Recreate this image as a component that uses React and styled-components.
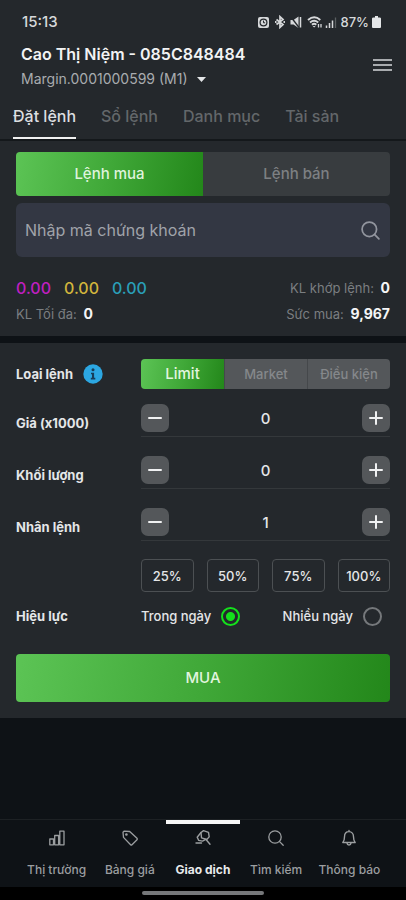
import { useState } from 'react';
import styled, { createGlobalStyle } from 'styled-components';

const GlobalStyle = createGlobalStyle`
  * {
    box-sizing: border-box;
  }

  body {
    margin: 0;
    background: #0e1216;
    color: #e4e6e8;
    font-family: Inter, 'Noto Sans', sans-serif;
    font-size: 13px;
    line-height: 20px;
  }

  button,
  input {
    font: inherit;
    color: inherit;
    margin: 0;
    padding: 0;
    border: 0;
    background: none;
  }

  a {
    color: inherit;
    text-decoration: none;
  }
`;

const green = 'linear-gradient(100deg, #5cc455 0%, #40a838 50%, #23871a 100%)';

const Page = styled.div`
  min-height: 100vh;
  display: flex;
  flex-direction: column;
`;

const Panel = styled.section`
  background: #24282c;
  padding: ${(props) => props.$padding};
`;

/* Status bar */
const StatusBar = styled.div`
  display: flex;
  justify-content: space-between;
  align-items: center;
  height: 44px;
  padding: 0 25px 0 22px;
  background: #24282c;
  font-size: 15px;
  font-weight: 500;
  color: #d6d8da;
`;

const StatusIcons = styled.div`
  display: flex;
  align-items: center;
  gap: 3px;
  font-size: 13px;

  svg {
    display: block;
  }
`;

/* Header */
const Header = styled.header`
  display: flex;
  justify-content: space-between;
  align-items: center;
  padding: 0 14px 0 21px;
  background: #24282c;
`;

const AccountName = styled.h1`
  margin: 0 0 5px;
  font-size: 16px;
  line-height: 20px;
  font-weight: 600;
  color: #f2f3f4;
`;

const AccountButton = styled.button`
  display: flex;
  align-items: center;
  gap: 9px;
  font-size: 14px;
  color: #a9acaf;

  svg {
    display: block;
  }
`;

const MenuButton = styled.button`
  display: flex;
  flex-direction: column;
  gap: 3px;
  width: 19px;
  margin-bottom: 4px;

  span {
    height: 2px;
    background: #a9acaf;
  }
`;

const Tabs = styled.nav`
  display: flex;
  gap: 25px;
  padding: 17px 13px 0;
  background: #24282c;
  border-bottom: 2px solid #14181b;
`;

const Tab = styled.a`
  padding-bottom: 11px;
  border-bottom: 2px solid ${(props) => (props.$active ? '#f0f0f0' : 'transparent')};
  font-size: 16px;
  font-weight: 500;
  color: ${(props) => (props.$active ? '#dcdee0' : '#63676a')};
`;

/* Buy / sell switch */
const SideSwitch = styled.div`
  display: grid;
  grid-template-columns: 1fr 1fr;
  height: 44px;
  margin-bottom: 7px;
  border-radius: 4px;
  overflow: hidden;
`;

const SideButton = styled.button`
  background: ${(props) => (props.$active ? green : '#383c3f')};
  color: ${(props) => (props.$active ? '#dff3dc' : '#7d8083')};
  font-size: 15px;
  font-weight: 500;
`;

const SearchBox = styled.label`
  display: flex;
  align-items: center;
  height: 54px;
  margin-bottom: 20px;
  padding: 0 9px;
  border-radius: 6px;
  background: #333743;
  color: #92959e;

  input {
    flex: 1;
    min-width: 0;
    font-size: 16px;
    outline: none;
  }

  input::placeholder {
    color: #a0a3aa;
    opacity: 1;
  }
`;

const Summary = styled.div`
  display: flex;
  justify-content: space-between;
  align-items: center;
  height: 22px;
  margin-bottom: ${(props) => props.$gap || '0'};
  color: #7b7e81;

  strong {
    margin-left: 3px;
    font-size: 14px;
    font-weight: 700;
    color: #f4f5f6;
  }
`;

const Prices = styled.div`
  display: flex;
  gap: 13px;
  font-size: 16px;
  font-weight: 500;
`;

const Price = styled.span`
  color: ${(props) => props.$color};
`;

/* Order form */
const Form = styled.form`
  display: flex;
  flex-direction: column;
  margin-top: 7px;
  padding: 16px;
  background: #24282c;
`;

const Row = styled.div`
  display: grid;
  grid-template-columns: 125px minmax(0, 1fr);
  align-items: ${(props) => props.$align || 'center'};
  margin-bottom: ${(props) => props.$gap};
`;

const RowLabel = styled.label`
  display: flex;
  align-items: center;
  gap: 10px;
  line-height: 28px;
  font-weight: 700;
  color: #e4e6e8;
`;

const TypeSwitch = styled.div`
  display: grid;
  grid-template-columns: repeat(3, 1fr);
  height: 30px;
  border-radius: 4px;
  overflow: hidden;
`;

const TypeButton = styled.button`
  background: ${(props) => (props.$active ? green : '#54575a')};
  color: ${(props) => (props.$active ? '#e2f5df' : '#85888b')};
  font-size: ${(props) => (props.$active ? '15px' : '13px')};
  font-weight: 500;

  & + & {
    border-left: 1px solid #45484b;
  }
`;

const Stepper = styled.div`
  display: flex;
  justify-content: space-between;
  height: 33px;
  border-bottom: 1px solid #34383b;

  input {
    flex: 1;
    min-width: 0;
    height: 28px;
    text-align: center;
    font-size: 15px;
    font-weight: 500;
    outline: none;
  }
`;

const StepButton = styled.button`
  display: flex;
  align-items: center;
  justify-content: center;
  width: 28px;
  height: 28px;
  border-radius: 7px;
  background: #54575a;
  color: #f0f1f2;
`;

const Percents = styled.div`
  display: grid;
  grid-template-columns: repeat(4, 1fr);
  gap: 13px;
  grid-column: 2;
`;

const PercentButton = styled.button`
  height: 33px;
  border: 1px solid #4c5053;
  border-radius: 4px;
  font-weight: 500;
`;

const Terms = styled.div`
  display: flex;
  justify-content: space-between;
  padding-right: 8px;
`;

const Term = styled.label`
  display: flex;
  align-items: center;
  gap: 10px;
  font-weight: 500;
`;

const Radio = styled.input`
  appearance: none;
  width: 19px;
  height: 19px;
  border: 2px solid #75787b;
  border-radius: 50%;

  &:checked {
    border-color: #14e01c;
    background: radial-gradient(circle, #14e01c 4px, transparent 5px);
  }
`;

const SubmitButton = styled.button`
  height: 48px;
  border-radius: 4px;
  background: ${green};
  color: #e2f5df;
  font-size: 15px;
  font-weight: 500;
`;

/* Bottom navigation */
const BottomNav = styled.nav`
  display: grid;
  grid-template-columns: repeat(5, 1fr);
  height: 68px;
  margin-top: auto;
  padding: 0 20px;
  border-top: 1px solid #1d2124;
`;

const NavItem = styled.a`
  display: flex;
  flex-direction: column;
  align-items: center;
  gap: 13px;
  padding-top: 5px;
  border-top: 4px solid ${(props) => (props.$active ? '#f6f6f6' : 'transparent')};
  font-size: 12px;
  font-weight: ${(props) => (props.$active ? 700 : 500)};
  color: ${(props) => (props.$active ? '#e8eaeb' : '#9b9ea0')};
  white-space: nowrap;

  svg {
    display: block;
    color: #9b9ea0;
  }
`;

const GestureBar = styled.div`
  display: flex;
  justify-content: center;
  height: 13px;
  padding-top: 4px;
  background: #000;

  span {
    width: 30%;
    height: 4px;
    border-radius: 2px;
    background: #76787a;
  }
`;

const Line = ({ size = 18, width = 1.5, children }) => (
    <svg width={size} height={size} viewBox="0 0 18 18" fill="none" stroke="currentColor"
        strokeWidth={width} strokeLinecap="round" strokeLinejoin="round" aria-hidden="true">
        {children}
    </svg>
);

const SearchIcon = ({ size, width }) => (
    <Line size={size} width={width}>
        <circle cx="8" cy="8" r="6.2" />
        <path d="M12.6 12.6 16.2 16.2" />
    </Line>
);

const InfoIcon = () => (
    <svg width="20" height="20" viewBox="0 0 20 20" aria-hidden="true">
        <circle cx="10" cy="10" r="9.7" fill="#2ca7e2" />
        <circle cx="10" cy="5.8" r="1.5" fill="#173d58" />
        <path d="M8 8.7h3.1v5.1h1.2v1.6H7.8v-1.6H9v-3.5H8z" fill="#173d58" />
    </svg>
);

const SystemIcons = () => (
    <svg width="80" height="14" viewBox="0 0 80 14" fill="none" stroke="#d6d8da" aria-hidden="true">
        {/* alarm */}
        <rect x="1" y="2" width="11" height="11" rx="2" fill="#d6d8da" stroke="none" />
        <circle cx="6.5" cy="7.5" r="3.4" stroke="#24282c" strokeWidth="1.2" />
        <path d="M6.5 5.6v2.2h1.6" stroke="#24282c" strokeWidth="1" />
        {/* bluetooth */}
        <path d="M19.5 4.5l6.5 5-3 2.8V1.7l3 2.8-6.5 5" strokeWidth="1.7" />
        <path d="M18 7h1.5M26.5 7H28" strokeWidth="1.8" />
        {/* muted speaker */}
        <path d="M33.5 5h3l5-3.500v11.500l-5-3.500h-3z" fill="#d6d8da" stroke="none" />
        <path d="M34 2l8 10.5" stroke="#24282c" strokeWidth="1.3" />
        <path d="M43.5 2v10.5" strokeWidth="1.5" />
        {/* wifi */}
        <path d="M51 5c4-3.4 8.5-3.4 12.3 0M53 7.4c2.6-2.2 5.6-2.2 8.2 0M55 9.7c1.3-1.2 3-1.2 4.3 0" strokeWidth="1.9" />
        <path d="M57.1 12.5l-1.5-1.6h3z" fill="#d6d8da" stroke="none" />
        <path d="M61.5 9v3.5M64 9v3.5" strokeWidth="1.3" />
        {/* signal */}
        <path d="M69.5 10.5v2.5M72.5 8v5M75.5 5.5v7.5" strokeWidth="1.5" />
        <path d="M78.5 2.5v10.5" stroke="#5b5f62" strokeWidth="1.3" />
    </svg>
);

const BatteryIcon = () => (
    <svg width="9" height="12" viewBox="0 0 9 12" aria-hidden="true">
        <path d="M3 0h3v1.5h1.500q1.500 0 1.500 1v8.500q0 1-1 1h-7q-1 0-1-1V2.500q0-1 1.500-1H3z" fill="#e4e6e8" />
    </svg>
);

const navItems = [
    {
        label: 'Thị trường',
        icon: (
            <Line width={1.3}>
                <path d="M1.8 10h3.7v5.8H1.8zM6.7 6.5h3.9v9.3H6.7zM11.8 2.2h4.2v13.6h-4.2z" />
            </Line>
        ),
    },
    {
        label: 'Bảng giá',
        icon: (
            <Line width={1.3}>
                <path d="M2 3.2 3 2.2l5.700.3 7.300 6.800a1 1 0 0 1 0 1.400l-5 5a1 1 0 0 1-1.400 0L2.500 8.400z" />
                <circle cx="5.4" cy="5.5" r=".7" />
            </Line>
        ),
    },
    {
        label: 'Giao dịch',
        active: true,
        icon: (
            <Line width={1.4}>
                <path d="M7 3.5 9.5 1.6l5 1.7.7 4.6-2.4 2.600-5.300-1.700z" />
                <path d="M7 3.5 3.2 8.2l1.5 3.2 3.8.7 3.2-1.7M12 10.5l4 4.8M2 14h5.500" />
            </Line>
        ),
    },
    { label: 'Tìm kiếm', icon: <SearchIcon width={1.3} /> },
    {
        label: 'Thông báo',
        icon: (
            <Line width={1.4}>
                <path d="M2.8 13.5c1.6-1.6 1.7-3.4 1.7-5.7C4.5 4.8 6.2 2.6 9 2.6s4.5 2.2 4.5 5.2c0 2.3.1 4.1 1.7 5.7zM7 14.2c.3 2.4 3.7 2.4 4 0M9 1.4v1" />
            </Line>
        ),
    },
];

const NumberField = ({ id, label, initial, gap }) => {
    const [value, setValue] = useState(initial);

    return (
        <Row $align="end" $gap={gap}>
            <RowLabel htmlFor={id}>{label}</RowLabel>
            <Stepper>
                <StepButton type="button" aria-label="Giảm" onClick={() => setValue(Math.max(0, value - 1))}>
                    <Line width={2}><path d="M3 9h12" /></Line>
                </StepButton>
                <input
                    id={id}
                    inputMode="numeric"
                    value={value}
                    onChange={(e) => setValue(Number(e.target.value) || 0)}
                />
                <StepButton type="button" aria-label="Tăng" onClick={() => setValue(value + 1)}>
                    <Line width={2}><path d="M3 9h12M9 3v12" /></Line>
                </StepButton>
            </Stepper>
        </Row>
    );
};

export default function App() {
    const [side, setSide] = useState('Lệnh mua');
    const [type, setType] = useState('Limit');

    return (
        <Page>
            <GlobalStyle />
            <StatusBar>
                <span>15:13</span>
                <StatusIcons>
                    <SystemIcons />
                    <span>87%</span>
                    <BatteryIcon />
                </StatusIcons>
            </StatusBar>

            <Header>
                <div>
                    <AccountName>Cao Thị Niệm - 085C848484</AccountName>
                    <AccountButton type="button">
                        Margin.0001000599 (M1)
                        <svg width="9" height="5" viewBox="0 0 9 5" aria-hidden="true">
                            <path d="M0 0h9L4.500 5z" fill="#e4e6e8" />
                        </svg>
                    </AccountButton>
                </div>
                <MenuButton type="button" aria-label="Menu">
                    <span />
                    <span />
                    <span />
                </MenuButton>
            </Header>

            <Tabs>
                <Tab href="#order" $active>Đặt lệnh</Tab>
                <Tab href="#book">Sổ lệnh</Tab>
                <Tab href="#portfolio">Danh mục</Tab>
                <Tab href="#assets">Tài sản</Tab>
            </Tabs>

            <Panel $padding="11px 16px 11px">
                <SideSwitch>
                    {['Lệnh mua', 'Lệnh bán'].map((name) => (
                        <SideButton key={name} type="button" $active={side === name} onClick={() => setSide(name)}>
                            {name}
                        </SideButton>
                    ))}
                </SideSwitch>
                <SearchBox>
                    <input type="text" placeholder="Nhập mã chứng khoán" aria-label="Nhập mã chứng khoán" />
                    <SearchIcon size={21} />
                </SearchBox>
                <Summary $gap="4px">
                    <Prices>
                        <Price $color="#c01fc0">0.00</Price>
                        <Price $color="#d2b53c">0.00</Price>
                        <Price $color="#2a9fb8">0.00</Price>
                    </Prices>
                    <span>KL khớp lệnh: <strong>0</strong></span>
                </Summary>
                <Summary>
                    <span>KL Tối đa: <strong>0</strong></span>
                    <span>Sức mua: <strong>9,967</strong></span>
                </Summary>
            </Panel>

            <Form onSubmit={(e) => e.preventDefault()}>
                <Row $gap="15px">
                    <RowLabel as="span">
                        Loại lệnh
                        <InfoIcon />
                    </RowLabel>
                    <TypeSwitch>
                        {['Limit', 'Market', 'Điều kiện'].map((name) => (
                            <TypeButton key={name} type="button" $active={type === name} onClick={() => setType(name)}>
                                {name}
                            </TypeButton>
                        ))}
                    </TypeSwitch>
                </Row>
                <NumberField id="price" label="Giá (x1000)" initial={0} gap="19px" />
                <NumberField id="volume" label="Khối lượng" initial={0} gap="19px" />
                <NumberField id="multiply" label="Nhân lệnh" initial={1} gap="18px" />
                <Row $gap="10px">
                    <Percents>
                        {[25, 50, 75, 100].map((percent) => (
                            <PercentButton key={percent} type="button">{percent}%</PercentButton>
                        ))}
                    </Percents>
                </Row>
                <Row $gap="24px">
                    <RowLabel as="span">Hiệu lực</RowLabel>
                    <Terms>
                        <Term>
                            Trong ngày
                            <Radio type="radio" name="term" value="day" defaultChecked />
                        </Term>
                        <Term>
                            Nhiều ngày
                            <Radio type="radio" name="term" value="multi" />
                        </Term>
                    </Terms>
                </Row>
                <SubmitButton type="submit">MUA</SubmitButton>
            </Form>

            <BottomNav>
                {navItems.map(({ label, icon, active }) => (
                    <NavItem key={label} href="#nav" $active={active}>
                        {icon}
                        {label}
                    </NavItem>
                ))}
            </BottomNav>
            <GestureBar>
                <span />
            </GestureBar>
        </Page>
    );
}
